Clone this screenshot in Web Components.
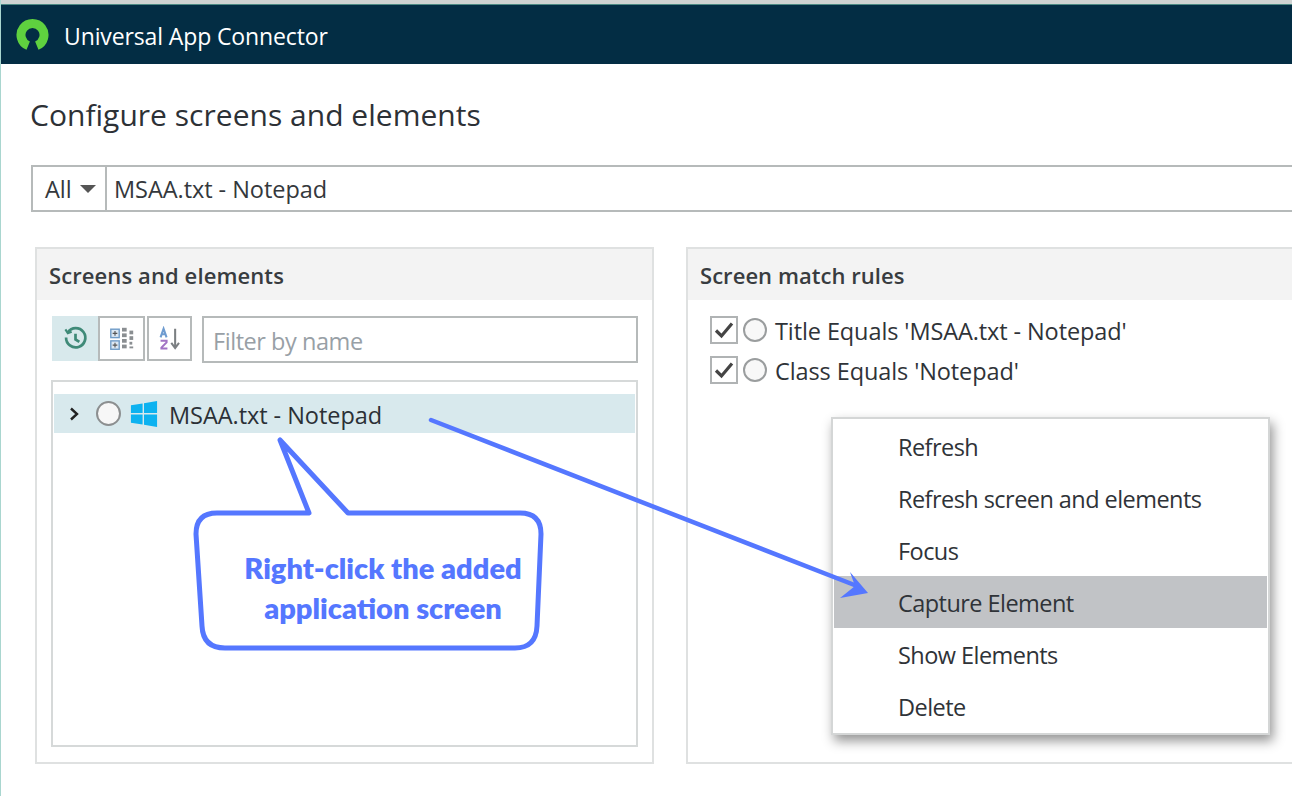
<!DOCTYPE html>
<html><head><meta charset="utf-8"><style>
html,body{margin:0;padding:0;width:1292px;height:796px;overflow:hidden;background:#fff;font-family:"Open Sans","Noto Sans",sans-serif;color:#2b2f33}
</style></head><body>
<app-window>
  <title-bar>Universal App Connector</title-bar>
  <main-content>
    <h-title>Configure screens and elements</h-title>
    <search-bar value="MSAA.txt - Notepad"></search-bar>
    <panel-row>
      <ui-panel heading="Screens and elements" style="width:619px" ls=".1px">
        <tree-view></tree-view>
      </ui-panel>
      <ui-panel heading="Screen match rules" style="flex:1 0 auto;margin-right:-40px" ls=".05px">
        <rule-list>
          <rule-item>Title Equals 'MSAA.txt - Notepad'</rule-item>
          <rule-item>Class Equals 'Notepad'</rule-item>
        </rule-list>
      </ui-panel>
    </panel-row>
  </main-content>
  <context-menu>
    <menu-item>Refresh</menu-item>
    <menu-item>Refresh screen and elements</menu-item>
    <menu-item>Focus</menu-item>
    <menu-item active>Capture Element</menu-item>
    <menu-item>Show Elements</menu-item>
    <menu-item>Delete</menu-item>
  </context-menu>
  <call-out></call-out>
</app-window>
<script>
const def=(name,html,init)=>customElements.define(name,class extends HTMLElement{
  constructor(){super();this.attachShadow({mode:'open'}).innerHTML=typeof html==='function'?html(this):html;}
  connectedCallback(){init&&init(this)}
});
const FONT='"Open Sans","Noto Sans",sans-serif';
def('app-window',`<style>:host{display:flex;flex-direction:column;position:relative;width:1292px;height:796px;overflow:hidden;background:#fff;box-sizing:border-box;border-left:1px solid #a9d6cf}
.strip{height:4px;background:#cfd3d2;margin-left:-1px;border-bottom:1px solid #4d8a84;flex:none}</style><div class="strip"></div><slot></slot>`);
def('title-bar',`<style>:host{display:flex;align-items:center;flex:none;height:59px;margin-left:-1px;background:#032d44;color:#fff;font:23px/1 ${FONT};letter-spacing:-.12px;padding-left:16px;gap:15px}
svg{width:33px;height:33px;flex:none}span{padding-top:3px}</style>
<svg viewBox="0 0 33 33"><path d="M12.2 27.66A11.5 11.5 0 1 1 20.8 27.66" fill="none" stroke="#5fd13f" stroke-width="9" stroke-linecap="butt"/></svg><span><slot></slot></span>`);
def('main-content',`<style>:host{display:flex;flex-direction:column;flex:1;min-height:0;padding:0 0 0 30px}</style><slot></slot>`);
def('h-title',`<style>:host{display:block;height:101px;box-sizing:border-box;padding-top:30px;margin-left:-1px;font:30px/42px ${FONT};letter-spacing:.02px;color:#2d3136;white-space:nowrap}</style><slot></slot>`);
def('search-bar',h=>`<style>:host{display:flex;height:47px;width:1300px;box-sizing:border-box;border:2px solid #b6baba;flex:none;font:23.500px/1 ${FONT};letter-spacing:-.05px;color:#34383c;background:#fff}
.all{width:74px;box-sizing:border-box;border-right:2px solid #b6baba;display:flex;align-items:center;padding:2px 0 0 12px;gap:8px}
.caret{width:0;height:0;border:8px solid transparent;border-top:8px solid #555;border-bottom:0;margin-top:-2px}
.v{display:flex;align-items:center;padding:2px 0 0 7px}</style>
<div class="all">All<i class="caret"></i></div><div class="v">${h.getAttribute('value')}</div>`);
def('panel-row',`<style>:host{display:flex;gap:32px;margin:35px 0 0 4px;height:517px;flex:none}</style><slot></slot>`);
def('ui-panel',h=>`<style>:host{display:flex;flex-direction:column;box-sizing:border-box;border:2px solid #dfe1e1;background:#fff}
.h{height:51px;background:#f3f3f3;flex:none;display:flex;align-items:center;padding-left:12px;font:600 22px/1 ${FONT};letter-spacing:${h.getAttribute('ls')};color:#383c40;box-sizing:border-box}
.b{flex:1;min-height:0;display:flex;flex-direction:column}</style>
<div class="h">${h.getAttribute('heading')}</div><div class="b"><slot></slot></div>`);
def('tree-view',`<style>:host{display:flex;flex-direction:column;flex:1;padding:16px 14px 15px 14px;box-sizing:border-box;font:23.500px/1 ${FONT};letter-spacing:-.05px}
.tb{display:flex;height:47px;flex:none;margin-left:1px}
.btn{box-sizing:border-box;height:45px;width:47px;border:2px solid #b6baba;display:flex;align-items:center;justify-content:center;background:#fff}
.btn.on{border-color:#d8e9ec;background:#d8e9ec;width:46px}
.btn.last{margin-left:2px;width:45px}
.f{box-sizing:border-box;flex:1;margin-left:10px;height:47px;border:2px solid #b6baba;color:#98a0a6;display:flex;align-items:center;padding:5px 0 0 9px;letter-spacing:-.45px}
.list{box-sizing:border-box;flex:1;margin-top:17px;border:2px solid #d6d9d9;padding:12px 1px;}
.row{height:39px;background:#d8e9ed;display:flex;align-items:center;color:#2b3036}
.chev{width:14px;height:14px;margin-left:13px;flex:none}
.radio{box-sizing:border-box;width:25px;height:25px;border-radius:50%;border:2px solid #8c8f90;background:#f7f7f7;margin-left:15px;flex:none}
.win{width:28px;height:28px;margin-left:9px;flex:none}
.t{margin-left:11px;position:relative;top:2px}</style>
<div class="tb">
 <div class="btn on"><svg width="25" height="25" viewBox="0 0 26 26" fill="none" stroke="#3f8a78" stroke-width="2.800"><path d="M5 6.500A10 10 0 1 1 3.200 12"/><path d="M2.500 3.500 5 7.500l4-1.500" stroke-width="2.200"/><path d="M13 8v6l4 2.500"/></svg></div>
 <div class="btn"><svg width="28" height="28" viewBox="0 0 30 28"><g fill="#dce8f3" stroke="#6f9cc8" stroke-width="1.500"><rect x="3" y="3.500" width="9" height="9"/><rect x="3" y="16" width="9" height="9"/></g><path d="M5 8h5M7.500 5.500v5M5 20.500h5M7.500 18v5" stroke="#555" stroke-width="1.200"/><g fill="#8a8e91"><rect x="15" y="2" width="5" height="4"/><rect x="15" y="8" width="5" height="4"/><rect x="15" y="14" width="5" height="4"/><rect x="15" y="20" width="5" height="4"/><rect x="23" y="5" width="4" height="4"/><rect x="23" y="11" width="4" height="4"/><rect x="23" y="17" width="3" height="3"/><rect x="23" y="22" width="4" height="2"/></g></svg></div>
 <div class="btn last"><svg width="24" height="26" viewBox="0 0 28 28"><path d="M3 12 6.500 2 10 12M4.500 8.500h4" fill="none" stroke="#6f9cd0" stroke-width="2.400"/><path d="M3 16h7v2l-6 6v1h7" fill="none" stroke="#a274c4" stroke-width="2.400"/><path d="M20 2v21M15.500 18.500 20 24.500l4.500-6" fill="none" stroke="#7b7f82" stroke-width="2.400"/></svg></div>
 <div class="f">Filter by name</div>
</div>
<div class="list"><div class="row">
 <svg class="chev" viewBox="0 0 14 14" fill="none" stroke="#222" stroke-width="2.400"><path d="M4 1.500 10 7 4 12.500"/></svg>
 <div class="radio"></div>
 <svg class="win" viewBox="0 0 30 30" fill="#0db2f0"><path d="M1 5.500 13.500 3.700V14H1zM15 3.500 29 1v13H15zM1 15.500h12.500v10.800L1 24.500zM15 15.500h14V29l-14-2.500z"/></svg>
 <div class="t">MSAA.txt - Notepad</div>
</div></div>`);
def('rule-list',`<style>:host{display:flex;flex-direction:column;padding:16px 0 0 22px;gap:12px}</style><slot></slot>`);
def('rule-item',`<style>:host{display:flex;align-items:center;height:28px;font:23.500px/1 ${FONT};letter-spacing:-.1px;color:#2f3338;white-space:nowrap}
.c{box-sizing:border-box;width:28px;height:28px;border:2px solid #b0b3b4;display:flex;align-items:center;justify-content:center;flex:none}
.r{box-sizing:border-box;width:24px;height:24px;border:2px solid #9a9d9e;border-radius:50%;background:#f8f8f8;margin:0 8px 0 5px;flex:none}
span{padding-top:4px}</style>
<div class="c"><svg width="20" height="18" viewBox="0 0 20 18" fill="none" stroke="#444" stroke-width="3.200"><path d="M2 9.500 7.500 15 18 2.500"/></svg></div><div class="r"></div><span><slot></slot></span>`);
def('context-menu',`<style>:host{position:absolute;left:830px;top:417px;width:439px;height:318px;box-sizing:border-box;background:#fff;border:2px solid #d4d6d6;padding:1px 1px 0;box-shadow:3px 6px 11px rgba(0,0,0,.42);display:block}</style><slot></slot>`);
def('menu-item',`<style>:host{display:flex;align-items:center;height:52px;box-sizing:border-box;padding:4px 0 0 64px;font:23.500px/1 ${FONT};letter-spacing:-.55px;color:#2f3338}
:host([active]){background:#c1c3c6}</style><slot></slot>`);
def('call-out',`<style>:host{position:absolute;inset:0 0 0 -1px;display:block;pointer-events:none}
svg{position:absolute;left:0;top:0}
.t{position:absolute;left:196px;width:374px;text-align:center;font:800 29px/1 Lato,${FONT};color:#5577ff;white-space:nowrap}
</style>
<svg width="1292" height="796" fill="none"><path d="M309 513H217Q196 513 196 534L202 626Q203 648 225 648H515Q536 648 537 626L541 534Q541 513 520 513H348L280 440Z" stroke="#5577ff" stroke-width="5" stroke-linejoin="round" fill="#fff"/>
<path d="M431 420 857 586" stroke="#5577ff" stroke-width="4.500" stroke-linecap="round"/><path d="M868 593 850 572 855 586 840 598Z" fill="#5577ff"/></svg>
<div class="t" style="top:553px;left:196px">Right-click the added</div><div class="t" style="top:593px;left:196px">application screen</div>`);
</script>
</body></html>
